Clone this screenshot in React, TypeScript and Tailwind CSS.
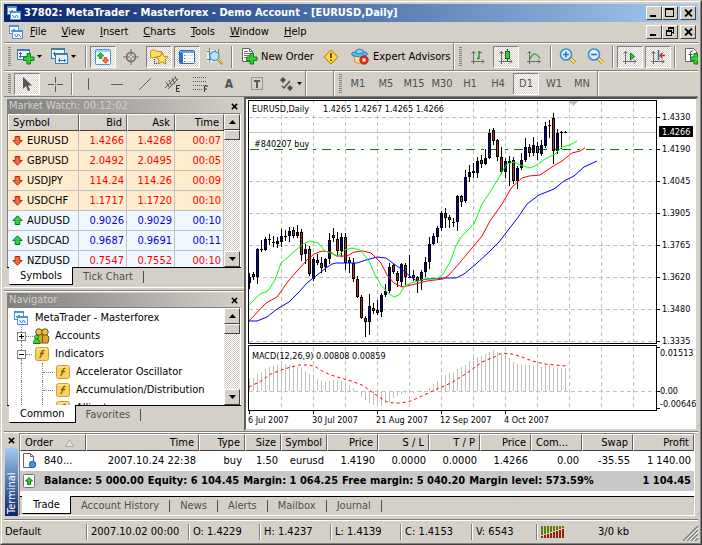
import type { ReactNode } from "react";
import clsx from "clsx";

const PRESSED =
  "border border-t-[#808080] border-l-[#808080] border-r-white border-b-white bg-[repeating-conic-gradient(#fff_0_25%,#d4d0c8_0_50%)] bg-[length:2px_2px]";
const RAISED =
  "border border-t-white border-l-white border-r-[#404040] border-b-[#404040] bg-[#d4d0c8]";
const HEADER_CELL =
  "border border-t-white border-l-white border-r-[#606060] border-b-[#404040] bg-[#d4d0c8] font-normal";

/* ---------- icons ---------- */

function Svg({ w = 16, h = 16, children }: { w?: number; h?: number; children: ReactNode }) {
  return (
    <svg
      width={w}
      height={h}
      viewBox={`0 0 ${w} ${h}`}
      fill="none"
      className="shrink-0"
      aria-hidden="true"
    >
      {children}
    </svg>
  );
}

function AppIcon() {
  return (
    <Svg w={14} h={14}>
      <rect x=".5" y=".5" width="9" height="8" fill="#fff" stroke="#4a90dc" />
      <path d="M0 1.500h10" stroke="#4a90dc" />
      <path d="M2 5l1.500 2 1.500-3 2 3" stroke="#3c80d0" />
      <rect x="3.500" y="5.500" width="10" height="8" fill="#f4faff" stroke="#4a90dc" />
      <path d="M3 6.500h11" stroke="#4a90dc" />
      <path d="M5.500 9l2 3 2-3 2 3" stroke="#3c80d0" />
    </Svg>
  );
}

function Plus({ x, y }: { x: number; y: number }) {
  return (
    <path
      transform={`translate(${x} ${y})`}
      d="M4 .5h3.500v3.500h3.500v3.500h-3.500v3.500h-3.500v-3.500h-3.500v-3.500h3.500z"
      fill="#2fd02f"
      stroke="#0a7d14"
    />
  );
}

function NewChartIcon() {
  return (
    <Svg w={18} h={17}>
      <rect x=".5" y="1.500" width="12" height="10" fill="#eef7ff" stroke="#3d7fb5" />
      <path d="M0 2h13" stroke="#3d7fb5" strokeWidth="2" />
      <path d="M3.500 4v6M2 5.500h3M2 8.500h8" stroke="#3d6f9d" />
      <Plus x={6} y={5} />
    </Svg>
  );
}

function ProfilesIcon() {
  return (
    <Svg w={18} h={17}>
      <rect x=".5" y=".5" width="13" height="10" fill="#eef7ff" stroke="#3d7fb5" />
      <path d="M0 1.500h14" stroke="#3d7fb5" />
      <path d="M2 5.500h9M3.500 4v4" stroke="#3d6f9d" />
      <rect x="4.500" y="5.500" width="12" height="10" fill="#e2f1fe" stroke="#3d7fb5" />
      <path d="M4 6.500h13" stroke="#3d7fb5" />
      <path d="M7 12.500h8M8.500 10v4M13.500 11v3" stroke="#3d6f9d" />
    </Svg>
  );
}

function MarketWatchIcon() {
  return (
    <Svg>
      <rect x=".5" y=".5" width="15" height="15" rx="1" fill="#fff" stroke="#4b97e0" />
      <path d="M1 2h14" stroke="#9ccffa" strokeWidth="2" />
      <path d="M5.500 3.500L9 7H7v2.500H4V7H2z" fill="#27c227" stroke="#0e7d18" strokeWidth=".6" />
      <path d="M10.500 14.500L7 11h2V8.500h3V11h2z" fill="#ff6a3a" stroke="#c23a10" strokeWidth=".6" />
    </Svg>
  );
}

function TargetIcon() {
  return (
    <Svg>
      <circle cx="8" cy="8" r="4.500" stroke="#6b6b6b" strokeWidth="1.500" />
      <path d="M8 0v7M8 9v7M0 8h7M9 8h7" stroke="#6b6b6b" />
    </Svg>
  );
}

function NavigatorIcon() {
  return (
    <Svg w={19} h={16}>
      <path d="M.5 2.500l1-1.500h4l1 1.500h5v6h-11z" fill="#f8dc6c" stroke="#c79a24" />
      <path d="M4.500 10v5M4 14.500h5" stroke="#444" strokeDasharray="1 1" />
      <path
        d="M12 3.500l1.900 3.900 4.300.5-3.200 2.900.9 4.300L12 13l-3.900 2.100.9-4.300-3.200-2.900 4.300-.5z"
        fill="#ffe268"
        stroke="#b88716"
      />
    </Svg>
  );
}

function TerminalIcon() {
  return (
    <Svg>
      <rect x=".5" y="1.500" width="15" height="13" rx="1" fill="#fff" stroke="#2b6cb0" />
      <path d="M1 3h14" stroke="#5aa7ea" strokeWidth="2" />
      <rect x="1" y="4" width="3" height="10" fill="#2874c0" />
      <path d="M6 6.500h8M6 9.500h8M6 12.500h8" stroke="#d3dde8" />
      <path d="M5 6.500h1M5 9.500h1M5 12.500h1" stroke="#c33" />
    </Svg>
  );
}

function TesterIcon() {
  return (
    <Svg w={18} h={17}>
      <rect x="1" y="2" width="12" height="12" fill="#eef1f4" />
      <path d="M3.500 0v14M1 3.500h3M12.500 1v5M9.500 2v4M1 11.500h5" stroke="#7b7b7b" />
      <circle cx="8.500" cy="8" r="4.500" fill="#bfe3fb" stroke="#5b9bd0" strokeWidth="1.500" />
      <path d="M12 11.500l4.500 4.500" stroke="#c79a24" strokeWidth="3" />
      <path d="M12 11l4.500 4.500" stroke="#f6dd7a" />
    </Svg>
  );
}

function NewOrderIcon() {
  return (
    <Svg w={17} h={17}>
      <path d="M1.500 .5h7l3 3v10h-10z" fill="#fff" stroke="#666" />
      <path d="M8.500.5v3h3" stroke="#666" />
      <path d="M3 3.500h4M3 5.500h6M3 7.500h6M3 9.500h4" stroke="#777" />
      <Plus x={5} y={5} />
    </Svg>
  );
}

function AlertIcon() {
  return (
    <Svg>
      <rect x="3" y="3" width="10" height="10" rx="1" transform="rotate(45 8 8)" fill="#ffd83a" stroke="#b88a12" />
      <path d="M8 4v5M8 10.500v1.500" stroke="#6e5200" strokeWidth="2" />
    </Svg>
  );
}

function ExpertIcon() {
  return (
    <Svg w={18} h={17}>
      <path d="M3 7h11l-1 7q-5 3-9 0z" fill="#ffe28a" stroke="#c79a24" />
      <ellipse cx="8.500" cy="6" rx="8" ry="2.800" fill="#62b4ea" stroke="#3279b3" />
      <path d="M4.500 5q0-4 4-4t4 4q-4 1.500-8 0z" fill="#8fd0f6" stroke="#3279b3" />
      <circle cx="13" cy="12" r="4.200" fill="#e0301c" stroke="#a81808" strokeWidth=".8" />
      <rect x="11.500" y="10.500" width="3" height="3" fill="#fff" />
    </Svg>
  );
}

function Axes() {
  return <path d="M3.500 15V2.500M1.500 4.500l2-2 2 2M1 12.500h13M12 10.500l2 2-2 2" stroke="#6a6a6a" />;
}

function BarsIcon() {
  return (
    <Svg>
      <Axes />
      <path d="M9 2v8M7 9.500h2M9 3.500h2.500" stroke="#128a1c" strokeWidth="1.300" />
    </Svg>
  );
}

function CandlesIcon() {
  return (
    <Svg>
      <Axes />
      <path d="M9.500 0v12" stroke="#0b6d14" />
      <rect x="7.500" y="2.500" width="4" height="7" fill="#33d433" stroke="#0b6d14" />
    </Svg>
  );
}

function LineChartIcon() {
  return (
    <Svg>
      <Axes />
      <path d="M4 10q3-6 5.500-5T14 9.500" stroke="#22a52c" strokeWidth="1.300" />
    </Svg>
  );
}

function ZoomIcon({ plus }: { plus?: boolean }) {
  return (
    <Svg w={18} h={17}>
      <path d="M11 10l5 5" stroke="#b58a1c" strokeWidth="3.500" />
      <path d="M11 10l5 5" stroke="#ffe36a" strokeWidth="1.800" />
      <circle cx="7" cy="6.500" r="5.500" fill="#dff1ff" stroke="#3f8bd4" strokeWidth="1.600" />
      <path d={plus ? "M4 6.500h6M7 3.500v6" : "M4 6.500h6"} stroke="#2d6fb6" strokeWidth="1.600" />
    </Svg>
  );
}

function AutoScrollIcon() {
  return (
    <Svg>
      <Axes />
      <path d="M8.500 4v7l4-3.500z" fill="#35cf35" stroke="#0d7d17" />
    </Svg>
  );
}

function ShiftIcon() {
  return (
    <Svg>
      <Axes />
      <path d="M8.500 1v10" stroke="#2b6cb0" strokeWidth="1.500" />
      <path d="M15 6.500h-5M12.500 4L10 6.500 12.500 9" stroke="#c2301c" strokeWidth="1.300" />
    </Svg>
  );
}

function AddIndicatorIcon() {
  return (
    <Svg w={14} h={17}>
      <path d="M.5 .5h8l3 3v10h-11z" fill="#fff" stroke="#666" />
      <path d="M8 3q-2.500-1-2.500 2v6M3.500 6.500h4" stroke="#555" />
      <Plus x={5} y={5} />
    </Svg>
  );
}

function CursorIcon() {
  return (
    <Svg>
      <path d="M4 1v12l3-3 2 5 2-1-2-4.500h4z" fill="#555" />
    </Svg>
  );
}

function StrokeIcon({ d }: { d: string }) {
  return (
    <Svg>
      <path d={d} stroke="#5a5a5a" />
    </Svg>
  );
}

function ChannelIcon() {
  return (
    <Svg>
      <path d="M0 12L11 1M3 13L13 3M1 6l3 5M4 4l3 6M7 2l3 6M10 0l2 5" stroke="#5a5a5a" />
      <path d="M15 9.500h-3.500v6H15M11.500 12.500H14" stroke="#333" />
    </Svg>
  );
}

function FiboIcon() {
  return (
    <Svg>
      <path d="M0 1.500h14M0 5.500h14M0 9.500h14M0 13.500h9" stroke="#5a5a5a" strokeDasharray="1 1" />
      <path d="M11.500 16v-6H15M11.500 13H14" stroke="#333" />
    </Svg>
  );
}

function LabelIcon() {
  return (
    <Svg>
      <rect x="2.500" y="1.500" width="11" height="12" stroke="#5a5a5a" strokeDasharray="1 1" />
      <path d="M5 5h6M8 5V12" stroke="#5a5a5a" strokeWidth="2" />
    </Svg>
  );
}

function ArrowsIcon() {
  return (
    <Svg>
      <path d="M4 1l3 3-3 3-3-3zM11 9l3 3-3 3-3-3z" fill="#505050" />
      <path d="M3 10l2 2L11 5" stroke="#505050" strokeWidth="1.500" />
    </Svg>
  );
}

function Caret() {
  return (
    <Svg w={5} h={3}>
      <path d="M0 0h5L2.500 3z" fill="#000" />
    </Svg>
  );
}

function TickArrow({ up }: { up?: boolean }) {
  return (
    <Svg w={11} h={11}>
      {up ? (
        <path d="M5.500 .8l4.700 4.700H7.800v4H3.200v-4H.8z" fill="#35c94a" stroke="#0b7a1c" />
      ) : (
        <path d="M5.500 10.200L.8 5.500h2.400v-4h4.600v4h2.400z" fill="#f2683c" stroke="#a82c0c" />
      )}
    </Svg>
  );
}

function FunctionIcon() {
  return (
    <Svg w={14} h={14}>
      <rect x=".5" y=".5" width="13" height="13" rx="2" fill="#f7d25c" stroke="#d0a02a" />
      <path d="M2 2h10" stroke="#fdeeb0" />
      <path d="M9.500 3.500q-2.500-.5-2.700 2.500t-2.300 5M5 6.500h4" stroke="#7d5a08" strokeWidth="1.300" />
    </Svg>
  );
}

function AccountsIcon() {
  return (
    <Svg w={17} h={16}>
      <path d="M4.500 15L3 8.500 7 6h6l3 3-1 6z" fill="#d9a92c" stroke="#6d5208" />
      <circle cx="6" cy="4" r="3.200" fill="#ecc548" stroke="#6d5208" />
      <circle cx="12" cy="4" r="3.200" fill="#ecc548" stroke="#6d5208" />
      <path d="M9.500 7v7" stroke="#6d5208" />
      <circle cx="3.500" cy="9" r="2" fill="#4fe04f" stroke="#0e7d18" />
      <path d="M.5 15.500q0-4.500 3-4.500t3.500 4.500z" fill="#3cd23c" stroke="#0e7d18" />
    </Svg>
  );
}

function OrderRowIcon() {
  return (
    <Svg w={15} h={16}>
      <path d="M1.500 .5h7l3 3v11h-10z" fill="#fff" stroke="#666" />
      <path d="M8.500.5v3h3" stroke="#666" />
      <circle cx="10.500" cy="11.500" r="3.200" fill="#3b9be6" stroke="#12609f" />
    </Svg>
  );
}

function BalanceIcon() {
  return (
    <Svg w={13} h={15}>
      <rect x=".5" y=".5" width="11" height="13" rx="1" fill="#fff" stroke="#777" />
      <path d="M6 3.500l3.500 3.500H7.500v3.500h-3V7h-2z" fill="#2cc52c" stroke="#0e7d18" />
    </Svg>
  );
}

/* ---------- window buttons ---------- */

function WinButton({ label, d }: { label: string; d: string }) {
  return (
    <button
      type="button"
      aria-label={label}
      className={clsx("flex h-3.5 w-4 items-center justify-center", RAISED)}
    >
      <svg width="12" height="10" viewBox="0 0 12 10" fill="none" shapeRendering="crispEdges">
        <path d={d} stroke="#000" />
      </svg>
    </button>
  );
}

const MIN = "M2 7.500h6M2 8.500h6";
const MAX = "M1 .5h9M1 1.500h9M1.500 1v7.500h8V1";
const RESTORE = "M4 .5h6M4 1.500h6M4.500 1v2M9.500 1v5.500M8 5.500h2M2 3.500h6M2 4.500h6M2.500 4v4.500h5V4";

function CloseGlyph({ big }: { big?: boolean }) {
  return (
    <svg width={big ? 9 : 7} height={big ? 8 : 7} viewBox="0 0 8 7" fill="none" aria-hidden="true">
      <path d="M1 .5l6 6M7 .5l-6 6" stroke="#000" strokeWidth="1.700" />
    </svg>
  );
}

function WinButtons({ middle, middleLabel }: { middle: string; middleLabel: string }) {
  return (
    <div className="ml-auto flex pr-0.5">
      <WinButton label="Minimize" d={MIN} />
      <WinButton label={middleLabel} d={middle} />
      <button
        type="button"
        aria-label="Close"
        className={clsx("ml-0.5 flex h-3.5 w-4 items-center justify-center", RAISED)}
      >
        <CloseGlyph big />
      </button>
    </div>
  );
}

/* ---------- toolbars ---------- */

const menus = ["File", "View", "Insert", "Charts", "Tools", "Window", "Help"];

function Grip() {
  return (
    <div className="ml-1 mr-0.5 h-5 w-[3px] shrink-0 bg-[repeating-linear-gradient(#808080_0_1px,#d4d0c8_1px_2px)]" />
  );
}

function Sep() {
  return <div className="mx-0.5 h-[22px] w-0.5 shrink-0 border-l border-r border-l-[#808080] border-r-white" />;
}

function Band() {
  return <div className="w-0.5 shrink-0 self-stretch border-l border-r border-l-[#808080] border-r-white" />;
}

function Tool({ label, on, children }: { label: string; on?: boolean; children: ReactNode }) {
  return (
    <button
      type="button"
      aria-label={label}
      aria-pressed={on}
      className={clsx("mx-px flex h-[22px] w-[26px] shrink-0 items-center justify-center", on && PRESSED)}
    >
      {children}
    </button>
  );
}

function MainToolbar() {
  return (
    <div className="flex h-7 items-center overflow-hidden border-t border-[#808080] shadow-[inset_0_1px_#fff]">
      <Grip />
      <button type="button" aria-label="New chart" className="flex w-[34px] shrink-0 items-center gap-0.5 pl-1">
        <NewChartIcon />
        <Caret />
      </button>
      <button type="button" aria-label="Profiles" className="flex w-9 shrink-0 items-center gap-0.5 pl-1">
        <ProfilesIcon />
        <Caret />
      </button>
      <Sep />
      <Tool label="Market Watch" on><MarketWatchIcon /></Tool>
      <Tool label="Data Window"><TargetIcon /></Tool>
      <Tool label="Navigator" on><NavigatorIcon /></Tool>
      <Tool label="Terminal" on><TerminalIcon /></Tool>
      <Tool label="Strategy Tester"><TesterIcon /></Tool>
      <Sep />
      <button type="button" className="flex w-[82px] shrink-0 items-center gap-[3px] whitespace-nowrap pl-1.5">
        <NewOrderIcon />
        New Order
      </button>
      <Tool label="MetaEditor"><AlertIcon /></Tool>
      <button type="button" className="flex w-[108px] shrink-0 items-center gap-1 whitespace-nowrap pl-1.5">
        <ExpertIcon />
        Expert Advisors
      </button>
      <Band />
      <Grip />
      <Tool label="Bar Chart"><BarsIcon /></Tool>
      <Tool label="Candlesticks" on><CandlesIcon /></Tool>
      <Tool label="Line Chart"><LineChartIcon /></Tool>
      <Sep />
      <Tool label="Zoom In"><ZoomIcon plus /></Tool>
      <Tool label="Zoom Out"><ZoomIcon /></Tool>
      <Sep />
      <Tool label="Auto Scroll" on><AutoScrollIcon /></Tool>
      <Tool label="Chart Shift" on><ShiftIcon /></Tool>
      <Sep />
      <Tool label="Indicators"><AddIndicatorIcon /></Tool>
    </div>
  );
}

const periods = ["M1", "M5", "M15", "M30", "H1", "H4", "D1", "W1", "MN"];

function DrawingToolbar() {
  return (
    <div className="flex h-[27px] items-center overflow-hidden border-t border-b border-[#808080] text-[#505050] shadow-[inset_0_1px_#fff]">
      <Grip />
      <Tool label="Cursor" on><CursorIcon /></Tool>
      <Tool label="Crosshair"><StrokeIcon d="M8.500 1v6M8.500 10v6M1 8.500h6M10 8.500h6M8 8.500h1" /></Tool>
      <Sep />
      <Tool label="Vertical Line"><StrokeIcon d="M7.500 2v12" /></Tool>
      <Tool label="Horizontal Line"><StrokeIcon d="M2 8.500h12" /></Tool>
      <Tool label="Trendline"><StrokeIcon d="M2 14L14 2" /></Tool>
      <Tool label="Equidistant Channel"><ChannelIcon /></Tool>
      <Tool label="Fibonacci Retracement"><FiboIcon /></Tool>
      <Tool label="Text"><span className="text-xs font-bold">A</span></Tool>
      <Tool label="Text Label"><LabelIcon /></Tool>
      <button type="button" aria-label="Arrows" className="flex w-[34px] shrink-0 items-center gap-0.5 pl-2">
        <ArrowsIcon />
        <Caret />
      </button>
      <Band />
      <div className="w-[26px] shrink-0" />
      <Band />
      <Grip />
      {periods.map((p) => (
        <Tool key={p} label={p} on={p === "D1"}>
          {p}
        </Tool>
      ))}
      <div className="w-px" />
      <Band />
    </div>
  );
}

/* ---------- shared panel parts ---------- */

function ScrollArrow({ dir }: { dir: "up" | "down" }) {
  return (
    <button
      type="button"
      aria-label={`Scroll ${dir}`}
      className={clsx("flex h-4 w-4 shrink-0 items-center justify-center", RAISED)}
    >
      <Svg w={7} h={4}>
        <path d={dir === "up" ? "M0 4h7L3.500 0z" : "M0 0h7L3.500 4z"} fill="#000" />
      </Svg>
    </button>
  );
}

function ScrollBar() {
  return (
    <div className="flex w-4 shrink-0 flex-col bg-[repeating-conic-gradient(#fff_0_25%,#d4d0c8_0_50%)] bg-[length:2px_2px]">
      <ScrollArrow dir="up" />
      <div className={clsx("h-2.5", RAISED)} />
      <div className="flex-1" />
      <ScrollArrow dir="down" />
    </div>
  );
}

function PanelTitle({ children }: { children: ReactNode }) {
  return (
    <div className="flex h-3.5 items-center justify-between bg-linear-to-r from-[#808080] to-[#d4d0c8] px-0.5 text-[#d4d0c8]">
      <h2>{children}</h2>
      <button type="button" aria-label="Close panel" className="pr-px">
        <CloseGlyph />
      </button>
    </div>
  );
}

function Tabs({ items }: { items: string[] }) {
  return (
    <div className="flex h-[18px] items-start border-t border-black pl-0.5 text-[#505050]">
      {items.map((item, i) =>
        i === 0 ? (
          <button
            key={item}
            type="button"
            className="-mt-px h-[18px] border-r border-b border-l border-black border-l-white bg-white px-2.5 text-black"
          >
            {item}
          </button>
        ) : (
          <div key={item} className="flex h-[18px] items-center">
            <button type="button" className="px-2.5">
              {item}
            </button>
            <span className="h-3 w-px bg-[#505050]" />
          </div>
        ),
      )}
    </div>
  );
}

/* ---------- market watch ---------- */

const quotes = [
  { symbol: "EURUSD", bid: "1.4266", ask: "1.4268", time: "00:07", up: false, hot: true },
  { symbol: "GBPUSD", bid: "2.0492", ask: "2.0495", time: "00:05", up: false, hot: true },
  { symbol: "USDJPY", bid: "114.24", ask: "114.26", time: "00:09", up: false, hot: true },
  { symbol: "USDCHF", bid: "1.1717", ask: "1.1720", time: "00:10", up: false, hot: true },
  { symbol: "AUDUSD", bid: "0.9026", ask: "0.9029", time: "00:10", up: true, hot: false },
  { symbol: "USDCAD", bid: "0.9687", ask: "0.9691", time: "00:11", up: true, hot: false },
  { symbol: "NZDUSD", bid: "0.7547", ask: "0.7552", time: "00:10", up: false, hot: false },
];

function MarketWatch() {
  return (
    <section className="border-b border-white px-[3px] pt-0.5 pb-0.5">
      <PanelTitle>Market Watch: 00:12:02</PanelTitle>
      <div className="flex h-[154px] overflow-hidden border-t border-r border-l border-t-[#808080] border-l-[#808080] border-r-white">
        <div className="flex-1">
          <table className="w-full table-fixed border-separate border-spacing-0">
            <colgroup>
              <col className="w-[71px]" />
              <col className="w-12" />
              <col className="w-12" />
              <col />
            </colgroup>
            <thead>
              <tr className="h-[17px]">
                <th className={clsx(HEADER_CELL, "pl-1 text-left")}>Symbol</th>
                <th className={clsx(HEADER_CELL, "pr-1 text-right")}>Bid</th>
                <th className={clsx(HEADER_CELL, "pr-1 text-right")}>Ask</th>
                <th className={clsx(HEADER_CELL, "pr-1 text-right")}>Time</th>
              </tr>
            </thead>
            <tbody>
              {quotes.map((q) => (
                <tr
                  key={q.symbol}
                  className={clsx(
                    "h-5 *:border-r *:border-b *:border-[#c0c0c0]",
                    q.hot ? "bg-[#ffebcd]" : "bg-[#f0f8ff]",
                    q.up ? "text-[#0000e0]" : "text-[#ff0000]",
                  )}
                >
                  <td className="text-black">
                    <span className="flex items-center gap-1 pl-1">
                      <TickArrow up={q.up} />
                      {q.symbol}
                    </span>
                  </td>
                  <td className="pr-0.5 text-right">{q.bid}</td>
                  <td className="pr-0.5 text-right">{q.ask}</td>
                  <td className="pr-0.5 text-right">{q.time}</td>
                </tr>
              ))}
            </tbody>
          </table>
        </div>
        <ScrollBar />
      </div>
      <Tabs items={["Symbols", "Tick Chart"]} />
    </section>
  );
}

/* ---------- navigator ---------- */

function Toggle({ open, label }: { open?: boolean; label: string }) {
  return (
    <div className="flex h-full w-[9px] flex-col items-center">
      <span className="flex-1 border-l border-dotted border-[#808080]" />
      <button
        type="button"
        aria-label={label}
        aria-expanded={!!open}
        className="flex h-[9px] w-[9px] items-center justify-center border border-[#808080] bg-white"
      >
        <svg width="5" height="5" viewBox="0 0 5 5" shapeRendering="crispEdges">
          <path d={open ? "M0 2.500h5" : "M0 2.500h5M2.500 0v5"} stroke="#000" />
        </svg>
      </button>
      <span className="flex-1 border-l border-dotted border-[#808080]" />
    </div>
  );
}

function Leaf({ children }: { children: ReactNode }) {
  return (
    <li className="flex h-[18px] items-center pl-[13px]">
      <span className="h-full border-l border-dotted border-[#808080]" />
      <span className="ml-5 h-full border-l border-dotted border-[#808080]" />
      <span className="mr-[3px] w-2.5 border-t border-dotted border-[#808080]" />
      <FunctionIcon />
      <span className="ml-1.5">{children}</span>
    </li>
  );
}

function Navigator() {
  return (
    <section className="flex flex-1 flex-col border-t border-[#808080] px-[3px] pt-0.5 shadow-[inset_0_1px_#fff]">
      <PanelTitle>Navigator</PanelTitle>
      <div className="flex h-[98px] overflow-hidden border-t border-r border-l border-t-[#808080] border-l-[#808080] border-r-white bg-white">
        <ul className="flex-1 whitespace-nowrap pt-px">
          <li className="flex h-[18px] items-center gap-[7px] pl-1.5">
            <AppIcon />
            MetaTrader - Masterforex
          </li>
          <li className="flex h-[18px] items-center pl-[9px]">
            <Toggle label="Accounts" />
            <span className="w-[7px] border-t border-dotted border-[#808080]" />
            <AccountsIcon />
            <span className="ml-[5px]">Accounts</span>
          </li>
          <li className="flex h-[18px] items-center pl-[9px]">
            <Toggle open label="Indicators" />
            <span className="mr-[3px] w-[6px] border-t border-dotted border-[#808080]" />
            <FunctionIcon />
            <span className="ml-1.5">Indicators</span>
          </li>
          <Leaf>Accelerator Oscillator</Leaf>
          <Leaf>Accumulation/Distribution</Leaf>
          <Leaf>Alligator</Leaf>
        </ul>
        <ScrollBar />
      </div>
      <Tabs items={["Common", "Favorites"]} />
    </section>
  );
}

/* ---------- chart ---------- */

// x, high, low, body top, body bottom, direction (1 up, 0 down)
const candles: [number, number, number, number, number, number][] = [
  [249, 273, 289, 277, 283, 1], [253, 272, 280, 274, 277, 0], [257, 248, 284, 249, 277, 1],
  [261, 240, 252, 249, 250, 1], [265, 237, 251, 239, 250, 1], [269, 234, 245, 239, 240, 1],
  [273, 236, 247, 242, 243, 1], [277, 237, 248, 241, 244, 1], [281, 229, 247, 236, 242, 1],
  [285, 230, 241, 236, 237, 1], [289, 227, 242, 231, 236, 1], [293, 227, 238, 230, 236, 0],
  [297, 225, 238, 232, 236, 1], [301, 229, 261, 232, 255, 0], [305, 244, 264, 249, 254, 1],
  [309, 246, 276, 249, 274, 0], [313, 257, 281, 259, 279, 1], [317, 254, 265, 260, 263, 0],
  [321, 257, 273, 263, 268, 0], [325, 258, 272, 259, 267, 1], [329, 233, 264, 240, 259, 1],
  [333, 228, 242, 235, 238, 0], [337, 232, 256, 239, 251, 0], [341, 233, 257, 237, 251, 1],
  [345, 233, 270, 237, 263, 0], [349, 257, 273, 260, 263, 0], [353, 258, 282, 263, 279, 0],
  [357, 276, 298, 279, 297, 0], [361, 295, 319, 297, 318, 0], [365, 316, 337, 318, 322, 0],
  [369, 294, 335, 306, 322, 1], [373, 303, 314, 308, 311, 0], [377, 300, 315, 310, 313, 0],
  [381, 293, 317, 295, 312, 1], [385, 284, 297, 291, 295, 1], [389, 263, 293, 267, 291, 1],
  [393, 263, 274, 265, 272, 0], [397, 271, 287, 273, 281, 0], [401, 263, 287, 264, 282, 1],
  [405, 263, 285, 265, 277, 0], [409, 255, 278, 277, 278, 1], [413, 270, 281, 275, 278, 0],
  [417, 276, 293, 277, 281, 0], [421, 270, 290, 272, 281, 1], [425, 257, 277, 262, 272, 1],
  [429, 237, 269, 244, 262, 1], [433, 233, 245, 236, 244, 1], [437, 226, 243, 228, 237, 1],
  [441, 211, 231, 213, 228, 1], [445, 208, 228, 213, 218, 0], [449, 215, 228, 217, 220, 0],
  [453, 218, 227, 222, 223, 1], [457, 195, 231, 196, 222, 1], [461, 195, 207, 196, 202, 0],
  [465, 170, 203, 177, 201, 1], [469, 165, 182, 172, 177, 1], [473, 163, 178, 171, 173, 1],
  [477, 157, 178, 161, 173, 1], [481, 155, 168, 160, 164, 0], [485, 149, 165, 158, 164, 1],
  [489, 129, 159, 133, 158, 1], [493, 128, 145, 130, 141, 0], [497, 139, 161, 140, 157, 0],
  [501, 147, 174, 157, 172, 0], [505, 158, 178, 161, 172, 1], [509, 156, 186, 161, 163, 0],
  [513, 157, 184, 160, 181, 0], [517, 166, 189, 168, 181, 1], [521, 153, 170, 160, 168, 1],
  [525, 138, 162, 147, 160, 1], [529, 144, 157, 147, 153, 0], [533, 137, 156, 145, 153, 1],
  [537, 142, 160, 146, 153, 0], [541, 140, 156, 145, 154, 1], [545, 122, 148, 126, 146, 1],
  [549, 120, 138, 125, 126, 0], [553, 113, 164, 118, 151, 0], [557, 129, 154, 133, 151, 1],
  [561, 131, 149, 132, 133, 1], [565, 131, 133, 132, 133, 1],
];

const fast =
  "249,305 260,294 268,291 275,280 281,263 289,256 297,249 303,244 310,241 318,243 325,251 333,254 338,256 344,250 352,248 360,250 366,257 370,263 375,275 381,285 388,293 394,297 399,295 405,286 411,283 425,279 437,279 443,274 450,262 456,246 461,237 467,231 474,224 482,204 490,192 497,181 502,172 507,164 514,162 520,165 530,168 537,165 545,159 555,154 562,147 570,145 577,141";
const medium =
  "249,321 266,303 277,297 289,280 307,260 314,254 322,251 331,252 336,256 347,256 354,252 363,251 371,253 381,263 387,275 394,283 402,287 411,285 427,281 443,279 449,275 462,260 472,248 482,236 490,221 502,204 512,187 522,178 529,176 540,175 555,165 562,161 572,153 580,151 585,148";
const slow =
  "249,321 257,321 267,317 277,309 289,302 299,292 307,283 326,268 332,264 336,263 357,263 366,260 377,257 386,258 394,264 404,271 411,277 417,281 427,279 444,278 456,278 464,274 476,264 489,252 499,242 519,216 527,204 539,195 554,189 564,181 574,176 584,167 597,161";
const signal =
  "249,387 261,381 271,374 281,370 291,367 299,365 309,365 316,367 322,371 331,375 344,379 351,381 362,385 372,392 379,397 387,402 394,403 401,403 411,401 424,395 437,389 451,383 464,375 474,368 482,362 494,357 502,353 512,354 522,357 532,361 545,364 555,365 566,366";

// histogram bar ends, one every 4px from x=249; the zero level is 391
const macd = [
  378, 378, 374, 372, 369, 367, 366, 365, 365, 364, 365, 366, 367, 368, 371, 374, 377, 379, 381, 382,
  381, 380, 381, 381, 382, 385, 388, 391, 397, 400, 403, 405, 407, 406, 403, 402, 398, 396, 394, 393,
  393, 393, 392, 392, 391, 388, 384, 381, 377, 375, 373, 372, 369, 367, 365, 361, 358, 357, 356, 354,
  352, 350, 352, 354, 355, 358, 362, 364, 365, 365, 365, 365, 364, 367, 366, 364, 367, 367, 368, 368,
];

const gridX = [281, 313, 345, 377, 409, 441, 473, 505, 537, 569, 601, 633];
const gridY = [117, 181, 213, 245, 277, 309, 341];
const prices: [number, string][] = [
  [117, "1.4330"], [149, "1.4190"], [181, "1.4045"], [213, "1.3905"],
  [245, "1.3765"], [277, "1.3620"], [309, "1.3480"], [341, "1.3335"],
];
const dates: [number, string][] = [
  [249, "6 Jul 2007"], [313, "30 Jul 2007"], [377, "21 Aug 2007"], [441, "12 Sep 2007"], [505, "4 Oct 2007"],
];

function Chart() {
  return (
    <section className="min-w-0 flex-1 border-2 border-t-[#505050] border-r-[#d4d0c8] border-b-[#d4d0c8] border-l-[#606060] bg-white">
      <svg
        width="450"
        height="328"
        viewBox="246 99 450 328"
        fill="none"
        shapeRendering="crispEdges"
        className="block text-[9px]"
        role="img"
        aria-label="EURUSD daily chart"
      >
        <g stroke="#c0c0c0" strokeDasharray="4 3">
          {gridX.map((x) => (
            <path key={x} d={`M${x}.5 101V342M${x}.5 347V409`} />
          ))}
          {gridY.map((y) => (
            <path key={y} d={`M249 ${y}.5H656`} />
          ))}
          <path d="M249 391.500H656" />
        </g>
        <path d="M249 132.500H656" stroke="#c0c0c0" />
        <path d="M250 149.500H656" stroke="#008000" strokeDasharray="9 6 3 6" />
        <path d="M568 101h10l-5 5z" fill="#c0c0c0" />

        {candles.map(([x, hi, lo, top, bottom, up]) => (
          <g key={x}>
            <rect x={x} y={hi} width="1" height={lo - hi} fill="#000" />
            <rect x={x - 1} y={top} width="3" height={bottom - top} fill="#000" />
            {bottom - top > 2 && (
              <rect x={x} y={top + 1} width="1" height={bottom - top - 2} fill={up ? "#0000a8" : "#b03020"} />
            )}
          </g>
        ))}

        <g shapeRendering="auto" strokeWidth="1">
          <polyline points={slow} stroke="#0000ff" />
          <polyline points={medium} stroke="#ff0000" />
          <polyline points={fast} stroke="#00ff00" />
        </g>

        {macd.map((y, i) => (
          <rect
            key={i}
            x={249 + i * 4}
            y={Math.min(y, 391)}
            width="1"
            height={Math.max(Math.abs(391 - y), 1)}
            fill="#c0c0c0"
          />
        ))}
        <polyline points={signal} stroke="#ff0000" strokeDasharray="3 3" shapeRendering="auto" />

        <path d="M248.500 100.500H656.500V343.500H248.500zM248.500 345.500H656.500V410.500H248.500z" stroke="#000" />

        <g fill="#000">
          <rect x="250" y="103" width="195" height="11" fill="#fff" />
          <text x="252" y="112">EURUSD,Daily</text>
          <text x="323" y="112">1.4265 1.4267 1.4265 1.4266</text>
          <text x="254" y="147">#840207 buy</text>
          <text x="252" y="359">MACD(12,26,9) 0.00808 0.00859</text>
          {prices.map(([y, label]) => (
            <g key={label}>
              <rect x="657" y={y} width="3" height="1" />
              <text x="662" y={y + 3}>{label}</text>
            </g>
          ))}
          <rect x="659" y="126" width="34" height="11" />
          <text x="662" y="135" fill="#fff">1.4266</text>
          <path d="M657 347.500h3M657 391.500h3M657 408.500h3" stroke="#000" />
          <text x="660" y="356">0.01513</text>
          <text x="660" y="394">0.00</text>
          <text x="660" y="407">-0.00646</text>
          {dates.map(([x, label]) => (
            <g key={label}>
              <rect x={x} y="411" width="1" height="3" />
              <text x={x - 1} y="423">{label}</text>
            </g>
          ))}
        </g>
      </svg>
    </section>
  );
}

/* ---------- terminal ---------- */

const order = [
  { head: "Time", width: "w-[113px]", value: "2007.10.24 22:38" },
  { head: "Type", width: "w-[46px]", value: "buy" },
  { head: "Size", width: "w-9", value: "1.50" },
  { head: "Symbol", width: "w-[46px]", value: "eurusd" },
  { head: "Price", width: "w-[51px]", value: "1.4190" },
  { head: "S / L", width: "w-[51px]", value: "0.0000" },
  { head: "T / P", width: "w-[51px]", value: "0.0000" },
  { head: "Price", width: "w-[51px]", value: "1.4266" },
  { head: "Com...", width: "w-[51px]", value: "0.00" },
  { head: "Swap", width: "w-[51px]", value: "-35.55" },
  { head: "Profit", width: "w-auto", value: "1 140.00" },
];

const terminalTabs = ["Account History", "News", "Alerts", "Mailbox", "Journal"];

function Terminal() {
  return (
    <section className="flex border-t border-[#808080] pt-px pb-[3px] shadow-[inset_0_1px_#fff]">
      <div className="ml-px flex w-[13px] flex-col items-center">
        <button type="button" aria-label="Close terminal" className="py-1">
          <CloseGlyph />
        </button>
        <h2 className="flex w-full flex-1 rotate-180 items-center justify-start bg-linear-to-b from-[#0a246a] to-[#a6caf0] pt-0.5 text-white [writing-mode:vertical-rl]">
          Terminal
        </h2>
      </div>
      <div className="mr-[3px] ml-px min-w-0 flex-1 border border-t-[#808080] border-l-[#808080] border-r-white border-b-white pb-px">
        <div className="bg-white pb-[5px]">
          <table className="w-full table-fixed border-separate border-spacing-0 whitespace-nowrap">
            <colgroup>
              <col className="w-[66px]" />
              {order.map((c, i) => (
                <col key={i} className={c.width} />
              ))}
            </colgroup>
            <thead>
              <tr className="h-[17px]">
                <th className={clsx(HEADER_CELL, "pl-1 text-left")}>
                  <span className="flex items-center gap-3">
                    Order
                    <Svg w={9} h={8}>
                      <path d="M4.500 .5l4 7h-8z" fill="#e8e5df" stroke="#a8a49c" />
                    </Svg>
                  </span>
                </th>
                {order.map((c, i) => (
                  <th key={i} className={clsx(HEADER_CELL, c.head === "Com..." ? "pl-1 text-left" : "pr-1 text-right")}>
                    {c.head}
                  </th>
                ))}
              </tr>
            </thead>
            <tbody>
              <tr className="h-5">
                <td>
                  <span className="flex items-center gap-[7px] pl-0.5">
                    <OrderRowIcon />
                    840...
                  </span>
                </td>
                {order.map((c, i) => (
                  <td key={i} className="pr-[3px] text-right">
                    {c.value}
                  </td>
                ))}
              </tr>
              <tr className="h-5 bg-[#c8c8c8] font-bold">
                <td colSpan={11}>
                  <span className="flex items-center gap-2 pl-[3px]">
                    <BalanceIcon />
                    <span className="flex gap-1">
                      <span>Balance: 5 000.00</span>
                      <span>Equity: 6 104.45</span>
                      <span>Margin: 1 064.25</span>
                      <span>Free margin: 5 040.20</span>
                      <span>Margin level: 573.59%</span>
                    </span>
                  </span>
                </td>
                <td className="pr-[3px] text-right">1 104.45</td>
              </tr>
            </tbody>
          </table>
        </div>
        <Tabs items={["Trade", ...terminalTabs]} />
      </div>
    </section>
  );
}

/* ---------- status bar ---------- */

function StatusCell({ width, children }: { width: string; children: ReactNode }) {
  return (
    <div
      className={clsx(
        "flex h-4 shrink-0 items-center border-l border-[#808080] pl-1 shadow-[inset_1px_0_#fff]",
        width,
      )}
    >
      {children}
    </div>
  );
}

function StatusBar() {
  return (
    <footer className="flex h-[22px] items-center whitespace-nowrap border-t border-[#808080] pt-[3px] shadow-[inset_0_1px_#fff]">
      <div className="w-[82px] shrink-0 pl-px">Default</div>
      <StatusCell width="w-[102px]">2007.10.02 00:00</StatusCell>
      <StatusCell width="w-[71px]">O: 1.4229</StatusCell>
      <StatusCell width="w-[71px]">H: 1.4237</StatusCell>
      <StatusCell width="w-[70px]">L: 1.4139</StatusCell>
      <StatusCell width="w-[71px]">C: 1.4153</StatusCell>
      <StatusCell width="w-[65px]">V: 6543</StatusCell>
      <StatusCell width="w-[62px]">
        <svg width="24" height="12" viewBox="0 0 24 12" shapeRendering="crispEdges" aria-hidden="true">
          {[0, 1, 2, 3, 4, 5, 6, 7].map((i) => (
            <g key={i}>
              <rect x={i * 3} y="0" width="2" height={9 - i} fill="#5a7d0c" />
              <rect x={i * 3} y={10 - i} width="2" height={2 + i} fill="#a01c08" />
            </g>
          ))}
        </svg>
      </StatusCell>
      <div>3/0 kb</div>
      <div className="ml-auto self-end">
        <Svg w={15} h={15}>
          <path d="M0 15L15 0M4 15L15 4M8 15L15 8M12 15l3-3" stroke="#808080" strokeWidth="1.500" />
          <path d="M2 15L15 2M6 15l9-9M10 15l5-5" stroke="#fff" />
        </Svg>
      </div>
    </footer>
  );
}

export default function App() {
  return (
    <div className="flex min-h-screen flex-col border border-[#d4d0c8] border-r-[#404040] border-b-[#404040] bg-[#d4d0c8] text-[11px] leading-[14px] text-black [font-family:'DejaVu_Sans_Condensed','DejaVu_Sans',sans-serif]">
      <div className="flex flex-1 flex-col border border-white border-r-[#808080] border-b-[#808080] p-0.5">
        <header className="flex h-[18px] items-center bg-linear-to-r from-[#0a246a] to-[#a6caf0] pl-[3px] font-bold text-white">
          <AppIcon />
          <h1 className="ml-[3px] whitespace-nowrap">
            37802: MetaTrader - Masterforex - Demo Account - [EURUSD,Daily]
          </h1>
          <WinButtons middle={MAX} middleLabel="Maximize" />
        </header>

        <nav className="flex h-5 items-center pl-[5px]">
          <AppIcon />
          <div className="ml-[7px] flex gap-[15px]">
            {menus.map((m) => (
              <button key={m} type="button">
                <span className="underline">{m[0]}</span>
                {m.slice(1)}
              </button>
            ))}
          </div>
          <WinButtons middle={RESTORE} middleLabel="Restore" />
        </nav>

        <MainToolbar />
        <DrawingToolbar />

        <main className="flex flex-1">
          <div className="flex w-60 shrink-0 flex-col gap-0.5">
            <MarketWatch />
            <Navigator />
          </div>
          <Chart />
        </main>

        <Terminal />
        <StatusBar />
      </div>
    </div>
  );
}
